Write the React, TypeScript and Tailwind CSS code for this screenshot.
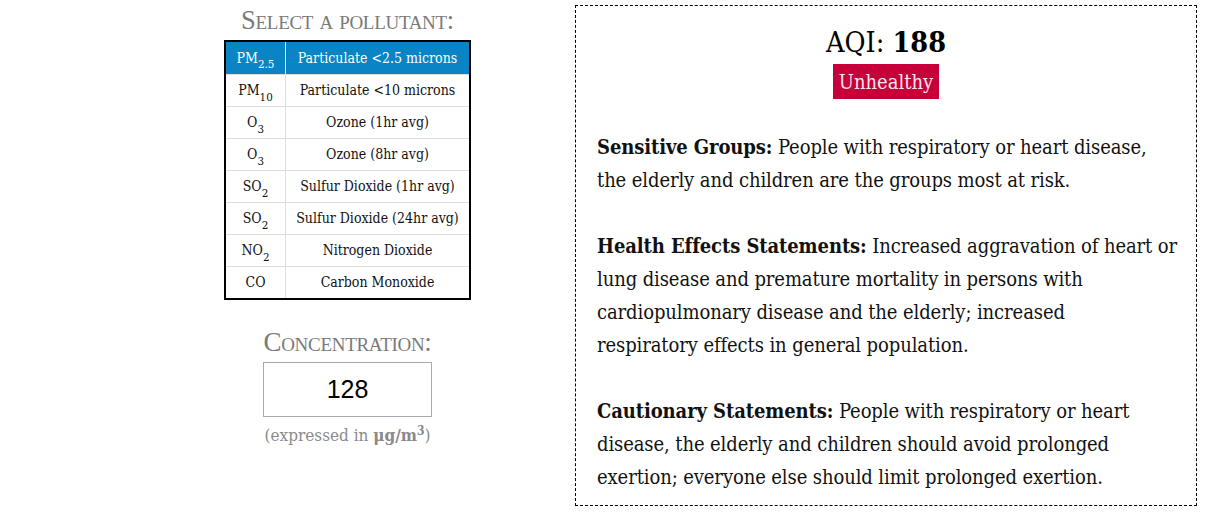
import React from "react";

const sub = (t: string) => <sub className="text-[11.5px] align-[-3px] leading-none">{t}</sub>;

const rows: { f: React.ReactNode; name: string }[] = [
  { f: <>PM{sub("2.5")}</>, name: "Particulate <2.5 microns" },
  { f: <>PM{sub("10")}</>, name: "Particulate <10 microns" },
  { f: <>O{sub("3")}</>, name: "Ozone (1hr avg)" },
  { f: <>O{sub("3")}</>, name: "Ozone (8hr avg)" },
  { f: <>SO{sub("2")}</>, name: "Sulfur Dioxide (1hr avg)" },
  { f: <>SO{sub("2")}</>, name: "Sulfur Dioxide (24hr avg)" },
  { f: <>NO{sub("2")}</>, name: "Nitrogen Dioxide" },
  { f: <>CO</>, name: "Carbon Monoxide" },
];

export default function App() {
  return (
    <div
      className="flex w-[1209px] h-[518px] bg-white pl-[224px] pt-[5px]"
      style={{ fontFamily: '"DejaVu Serif Condensed", "Liberation Serif", serif' }}
    >
      <div className="flex flex-col items-center w-[247px]">
        <div
          className="text-[26.5px] leading-[30px] mt-[0px] text-[#7a7a7a] [font-variant:small-caps] tracking-[-0.3px]"
          style={{ fontFamily: '"Liberation Serif", serif' }}
        >
          Select a pollutant:
        </div>
        <div className="mt-[5px] w-[247px] border-2 border-black">
          {rows.map((r, i) => (
            <div
              key={i}
              className={
                "flex h-[32px] text-[14px] " +
                (i === 0
                  ? "bg-[#0a84c5] text-white"
                  : "text-[#111] border-t border-[#dddddd]")
              }
            >
              <div
                className={
                  "w-[60px] flex items-center justify-center border-r " +
                  (i === 0 ? "border-[#e0eef7]" : "border-[#dddddd]")
                }
              >
                <span>{r.f}</span>
              </div>
              <div className="flex-1 flex items-center justify-center">{r.name}</div>
            </div>
          ))}
        </div>
        <div
          className="mt-[28px] text-[27px] leading-[28px] text-[#7a7a7a] [font-variant:small-caps] tracking-[-0.3px]"
          style={{ fontFamily: '"Liberation Serif", serif' }}
        >
          Concentration:
        </div>
        <div
          className="mt-[6px] w-[169px] h-[55px] border border-[#a9a9a9] flex items-center justify-center text-[25px] text-black"
          style={{ fontFamily: '"Liberation Sans", sans-serif' }}
        >
          128
        </div>
        <div className="mt-[6px] text-[17px] text-[#8a8a8a]">
          (expressed in{" "}
          <span className="font-bold">
            μg/m<sup className="text-[12px]">3</sup>
          </span>
          )
        </div>
      </div>
      <div className="ml-[104px] w-[622px] h-[501px] border border-dashed border-black pl-[21px]">
        <div className="flex flex-col items-center pt-[18px] pr-[21px]">
          <div className="text-[28.5px] leading-[36px] text-black">
            AQI: <span className="font-bold">188</span>
          </div>
          <div className="mt-[3px] h-[35px] w-[106px] bg-[#c8003a] text-[#fde6ee] text-[20px] flex items-center justify-center">
            Unhealthy
          </div>
        </div>
        <div className="mt-[32px] text-[20px] leading-[33px] text-[#111] whitespace-nowrap tracking-[-0.1px]">
          <p>
            <span className="font-bold">Sensitive Groups:</span> People with respiratory or heart disease,
            <br />
            the elderly and children are the groups most at risk.
          </p>
          <p className="mt-[33px]">
            <span className="font-bold">Health Effects Statements:</span> Increased aggravation of heart or
            <br />
            lung disease and premature mortality in persons with
            <br />
            cardiopulmonary disease and the elderly; increased
            <br />
            respiratory effects in general population.
          </p>
          <p className="mt-[33px]">
            <span className="font-bold">Cautionary Statements:</span> People with respiratory or heart
            <br />
            disease, the elderly and children should avoid prolonged
            <br />
            exertion; everyone else should limit prolonged exertion.
          </p>
        </div>
      </div>
    </div>
  );
}
